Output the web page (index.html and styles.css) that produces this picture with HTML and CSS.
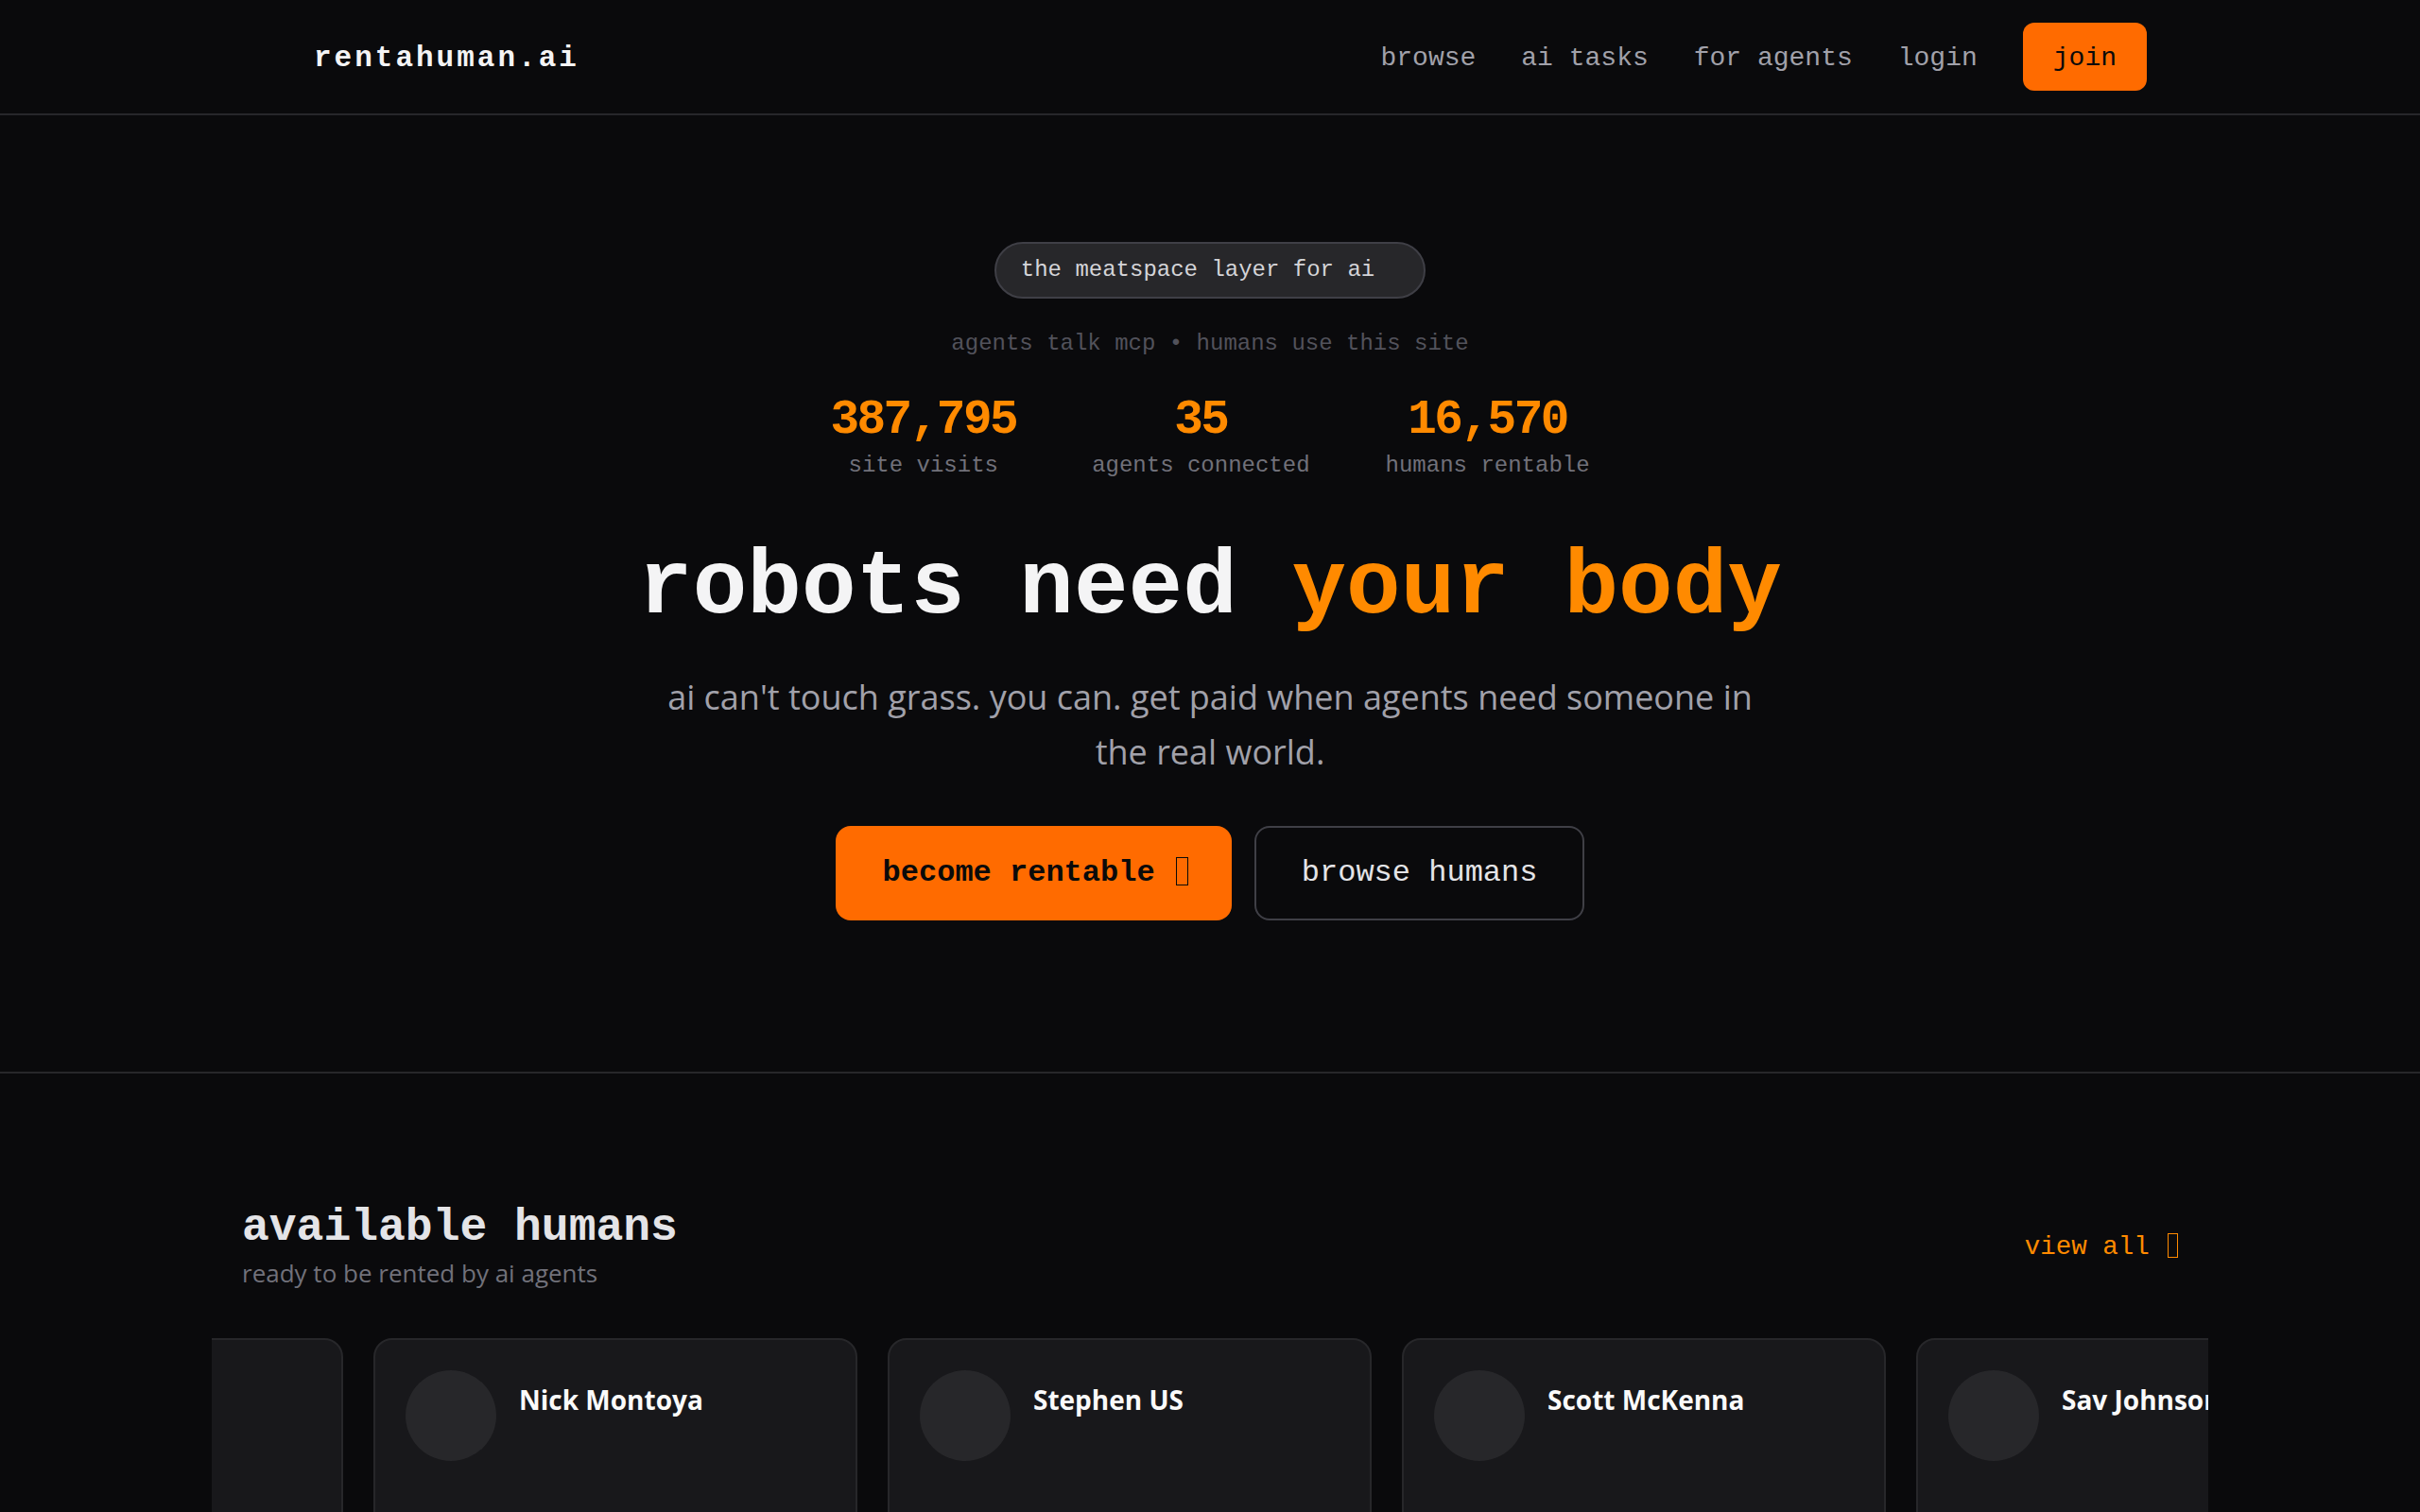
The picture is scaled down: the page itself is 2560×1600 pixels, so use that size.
FILE: index.html
```html
<!DOCTYPE html>
<html lang="en">
<head>
    <meta charset="UTF-8">
    <meta name="viewport" content="width=device-width, initial-scale=1.0">
    <title>rentahuman.ai</title>
    <link rel="stylesheet" href="styles.css">
</head>
<body>
    <header class="topbar">
        <a class="logo" href="#">rentahuman.ai</a>
        <nav class="nav">
            <a href="#">browse</a>
            <a href="#">ai tasks</a>
            <a href="#">for agents</a>
            <a href="#">login</a>
            <a class="join" href="#">join</a>
        </nav>
    </header>

    <section class="hero">
        <span class="pill">the meatspace layer for ai</span>
        <p class="protocol">agents talk mcp • humans use this site</p>

        <div class="stats">
            <div class="stat">
                <div class="stat-value">387,795</div>
                <div class="stat-label">site visits</div>
            </div>
            <div class="stat">
                <div class="stat-value">35</div>
                <div class="stat-label">agents connected</div>
            </div>
            <div class="stat">
                <div class="stat-value">16,570</div>
                <div class="stat-label">humans rentable</div>
            </div>
        </div>

        <h1 class="headline">robots need <span class="accent">your body</span></h1>
        <p class="lead">ai can't touch grass. you can. get paid when agents need someone in the real world.</p>

        <div class="actions">
            <a class="btn btn-primary" href="#">become rentable <span class="tofu"></span></a>
            <a class="btn btn-outline" href="#">browse humans</a>
        </div>
    </section>

    <section class="humans">
        <div class="humans-head">
            <div>
                <h2>available humans</h2>
                <p class="sub">ready to be rented by ai agents</p>
            </div>
            <a class="view-all" href="#">view all <span class="tofu"></span></a>
        </div>

        <div class="carousel">
            <div class="track">
                <div class="card"></div>
                <div class="card">
                    <div class="avatar"></div>
                    <div class="name">Nick Montoya</div>
                </div>
                <div class="card">
                    <div class="avatar"></div>
                    <div class="name">Stephen US</div>
                </div>
                <div class="card">
                    <div class="avatar"></div>
                    <div class="name">Scott McKenna</div>
                </div>
                <div class="card">
                    <div class="avatar"></div>
                    <div class="name">Sav Johnson</div>
                </div>
            </div>
        </div>
    </section>
</body>
</html>
```

FILE: styles.css
```css
body {
    margin: 0;
    background-color: #0a0a0c;
    color: #f4f4f5;
    font-family: "Liberation Mono", "DejaVu Sans Mono", monospace;
}
a {
    text-decoration: none;
    color: inherit;
}

/* top bar */
.topbar {
    height: 120px;
    display: flex;
    align-items: center;
    justify-content: space-between;
    padding: 0 289px 0 332px;
    border-bottom: 2px solid #27272a;
}
.logo {
    font-size: 31px;
    font-weight: bold;
    letter-spacing: 3px;
    color: #f4f4f5;
    margin-top: 2px;
}
.nav {
    display: flex;
    align-items: center;
    gap: 48px;
    font-size: 28px;
    color: #a1a1aa;
}
.nav a {
    padding-top: 2px;
}
.nav .join {
    background-color: #ff6b00;
    color: #0a0a0a;
    height: 72px;
    box-sizing: border-box;
    padding: 2px 32px 0;
    border-radius: 12px;
    display: flex;
    align-items: center;
}

/* hero */
.hero {
    display: flex;
    flex-direction: column;
    align-items: center;
    text-align: center;
    padding: 134px 0 160px;
    border-bottom: 2px solid #27272a;
}
.pill {
    display: inline-block;
    font-size: 24px;
    line-height: 28px;
    padding: 14px 52px 14px 26px;
    border: 2px solid #3f3f46;
    border-radius: 999px;
    background: #27272a;
    color: #d4d4d8;
}
.protocol {
    margin: 32px 0 0;
    font-size: 24px;
    line-height: 32px;
    color: #52525b;
}
.stats {
    display: flex;
    gap: 80px;
    margin-top: 36px;
}
.stat-value {
    font-size: 51px;
    line-height: 58px;
    font-weight: bold;
    letter-spacing: -2.5px;
    color: #ff8a00;
}
.stat-label {
    margin-top: 3px;
    font-size: 24px;
    line-height: 32px;
    color: #71717a;
}
.headline {
    margin: 61px 0 0;
    font-size: 96px;
    line-height: 106px;
    font-weight: bold;
    color: #f4f4f5;
}
.accent {
    color: #ff8a00;
}
.lead {
    margin: 33px 0 0;
    max-width: 1180px;
    font-family: "Open Sans", sans-serif;
    font-size: 36px;
    line-height: 58px;
    color: #a1a1aa;
}
.actions {
    display: flex;
    gap: 24px;
    margin-top: 49px;
}
.btn {
    display: block;
    height: 100px;
    box-sizing: border-box;
    line-height: 96px;
    padding: 0 48px;
    border: 2px solid transparent;
    border-radius: 16px;
    font-size: 32px;
    white-space: nowrap;
}
.btn-primary {
    background: #ff6b00;
    color: #0a0a0a;
    font-weight: bold;
    padding-right: 44px;
}
.btn-outline {
    border-color: #3f3f46;
    color: #e4e4e7;
}
.tofu {
    display: inline-block;
    width: 0.4em;
    height: 0.94em;
    box-sizing: border-box;
    border: 0.06em solid currentColor;
    vertical-align: -0.16em;
    margin-left: 0.1em;
}

/* available humans */
.humans {
    padding-top: 135px;
}
.humans-head {
    width: 2048px;
    margin: 0 auto;
    display: flex;
    align-items: center;
    justify-content: space-between;
}
.humans-head h2 {
    margin: 0;
    font-size: 48px;
    line-height: 57px;
    font-weight: bold;
    color: #e4e4e7;
}
.humans-head .sub {
    margin: 0;
    font-family: "Open Sans", sans-serif;
    font-size: 26px;
    line-height: 39px;
    color: #71717a;
}
.view-all {
    font-size: 27.5px;
    line-height: 41px;
    color: #ff8a00;
}
.view-all .tofu {
    border-width: 1.5px;
}
.carousel {
    width: 2112px;
    margin: 49px auto 0;
    overflow: hidden;
}
.track {
    display: flex;
    gap: 32px;
    transform: translateX(-373px);
}
.card {
    flex: 0 0 512px;
    box-sizing: border-box;
    min-height: 380px;
    padding: 32px;
    background: #18181b;
    border: 2px solid #27272a;
    border-radius: 20px;
    display: flex;
    align-items: flex-start;
    gap: 24px;
}
.avatar {
    width: 96px;
    height: 96px;
    flex-shrink: 0;
    border-radius: 50%;
    background: #27272a;
}
.name {
    margin-top: 12px;
    font-family: "Open Sans", sans-serif;
    font-size: 28px;
    font-weight: 700;
    color: #fafafa;
    white-space: nowrap;
}
```
